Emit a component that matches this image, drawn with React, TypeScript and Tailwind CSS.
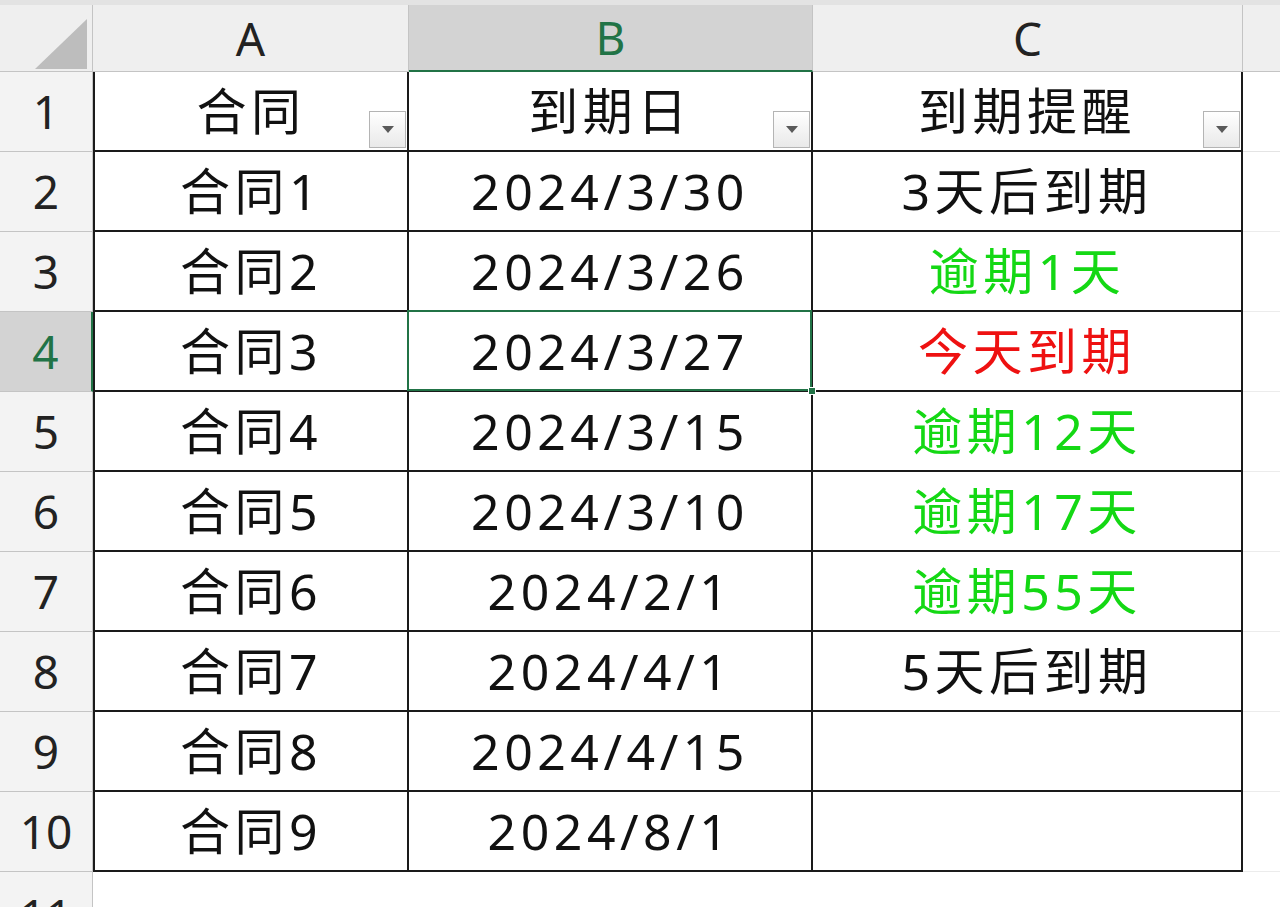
import React from "react";

type Row = { a: string; b: string; c: string; cc: string };

const rows: Row[] = [
  { a: "合同1", b: "2024/3/30", c: "3天后到期", cc: "text-[#111111]" },
  { a: "合同2", b: "2024/3/26", c: "逾期1天", cc: "text-[#14d814]" },
  { a: "合同3", b: "2024/3/27", c: "今天到期", cc: "text-[#ee1111]" },
  { a: "合同4", b: "2024/3/15", c: "逾期12天", cc: "text-[#14d814]" },
  { a: "合同5", b: "2024/3/10", c: "逾期17天", cc: "text-[#14d814]" },
  { a: "合同6", b: "2024/2/1", c: "逾期55天", cc: "text-[#14d814]" },
  { a: "合同7", b: "2024/4/1", c: "5天后到期", cc: "text-[#111111]" },
  { a: "合同8", b: "2024/4/15", c: "", cc: "text-[#111111]" },
  { a: "合同9", b: "2024/8/1", c: "", cc: "text-[#111111]" },
];

function Dropdown() {
  return (
    <div className="absolute right-[1px] bottom-[2px] w-[37px] h-[37px] border border-[#b4b4b4] bg-gradient-to-b from-[#ffffff] to-[#e9e9e9] flex items-center justify-center">
      <svg width="12" height="7" viewBox="0 0 12 7">
        <polygon points="0,0 12,0 6,7" fill="#5a5a5a" />
      </svg>
    </div>
  );
}

const cellFont = "text-[50px] tracking-[0.09em]";

export default function App() {
  return (
    <div
      className="w-[1280px] h-[907px] overflow-hidden bg-white"
      style={{ fontFamily: '"Noto Sans", "Noto Sans CJK SC", sans-serif' }}
    >
      <div className="h-[5px] bg-[#e3e3e3]" />
      <div className="grid grid-cols-[93px_316px_404px_430px_1fr] grid-rows-[67px_repeat(10,80px)_80px]">
        {/* corner */}
        <div className="bg-[#efefef] border-r border-b border-[#c4c4c4] relative">
          <svg className="absolute left-[35px] top-[14px]" width="52" height="50" viewBox="0 0 52 50">
            <polygon points="0,50 52,0 52,50" fill="#bdbdbd" />
          </svg>
        </div>
        <div className="bg-[#efefef] border-r border-b border-[#c4c4c4] flex items-center justify-center text-[46px] text-[#222]">
          A
        </div>
        <div className="bg-[#d3d3d3] border-r border-[#c4c4c4] border-b-2 border-b-[#217346] flex items-center justify-center text-[46px] text-[#217346]">
          B
        </div>
        <div className="bg-[#efefef] border-r border-b border-[#c4c4c4] flex items-center justify-center text-[46px] text-[#222]">
          C
        </div>
        <div className="bg-[#efefef] border-b border-[#c4c4c4]" />

        {/* row 1 */}
        <div className="bg-[#f3f3f3] border-r border-b border-[#c4c4c4] flex items-center justify-center text-[46px] text-[#222]">
          1
        </div>
        <div className={`relative border-l-2 border-r-2 border-b-2 border-[#1a1a1a] flex items-center justify-center text-[#111111] ${cellFont}`}>
          合同
          <Dropdown />
        </div>
        <div className={`relative border-r-2 border-b-2 border-[#1a1a1a] flex items-center justify-center text-[#111111] ${cellFont}`}>
          到期日
          <Dropdown />
        </div>
        <div className={`relative border-r-2 border-b-2 border-[#1a1a1a] flex items-center justify-center text-[#111111] ${cellFont}`}>
          到期提醒
          <Dropdown />
        </div>
        <div className="border-b border-[#e4e4e4]" />

        {rows.map((r, i) => {
          const n = i + 2;
          const sel = n === 4;
          return (
            <React.Fragment key={n}>
              <div
                className={
                  sel
                    ? "bg-[#d3d3d3] border-b border-[#c4c4c4] border-r-2 border-r-[#217346] flex items-center justify-center text-[46px] text-[#217346]"
                    : "bg-[#f3f3f3] border-r border-b border-[#c4c4c4] flex items-center justify-center text-[46px] text-[#222]"
                }
              >
                {n}
              </div>
              <div className={`border-l-2 border-r-2 border-b-2 border-[#1a1a1a] flex items-center justify-center text-[#111111] ${cellFont}`}>
                {r.a}
              </div>
              <div className={`relative border-r-2 border-b-2 border-[#1a1a1a] flex items-center justify-center text-[#111111] ${cellFont}`}>
                {r.b}
                {sel && (
                  <>
                    <div className="absolute left-[-2px] top-[-2px] right-[-1px] bottom-[-1px] border-2 border-[#217346] z-10" />
                    <div className="absolute right-[-5px] bottom-[-5px] w-[8px] h-[8px] bg-[#217346] border border-white z-20" />
                  </>
                )}
              </div>
              <div className={`border-r-2 border-b-2 border-[#1a1a1a] flex items-center justify-center ${cellFont} ${r.cc}`}>
                {r.c}
              </div>
              <div className="border-b border-[#ececec]" />
            </React.Fragment>
          );
        })}

        {/* row 11 */}
        <div className="bg-[#f3f3f3] border-r border-[#c4c4c4] flex items-start justify-center text-[46px] leading-none pt-[20px] text-[#222]">
          11
        </div>
        <div className="col-span-4" />
      </div>
    </div>
  );
}
